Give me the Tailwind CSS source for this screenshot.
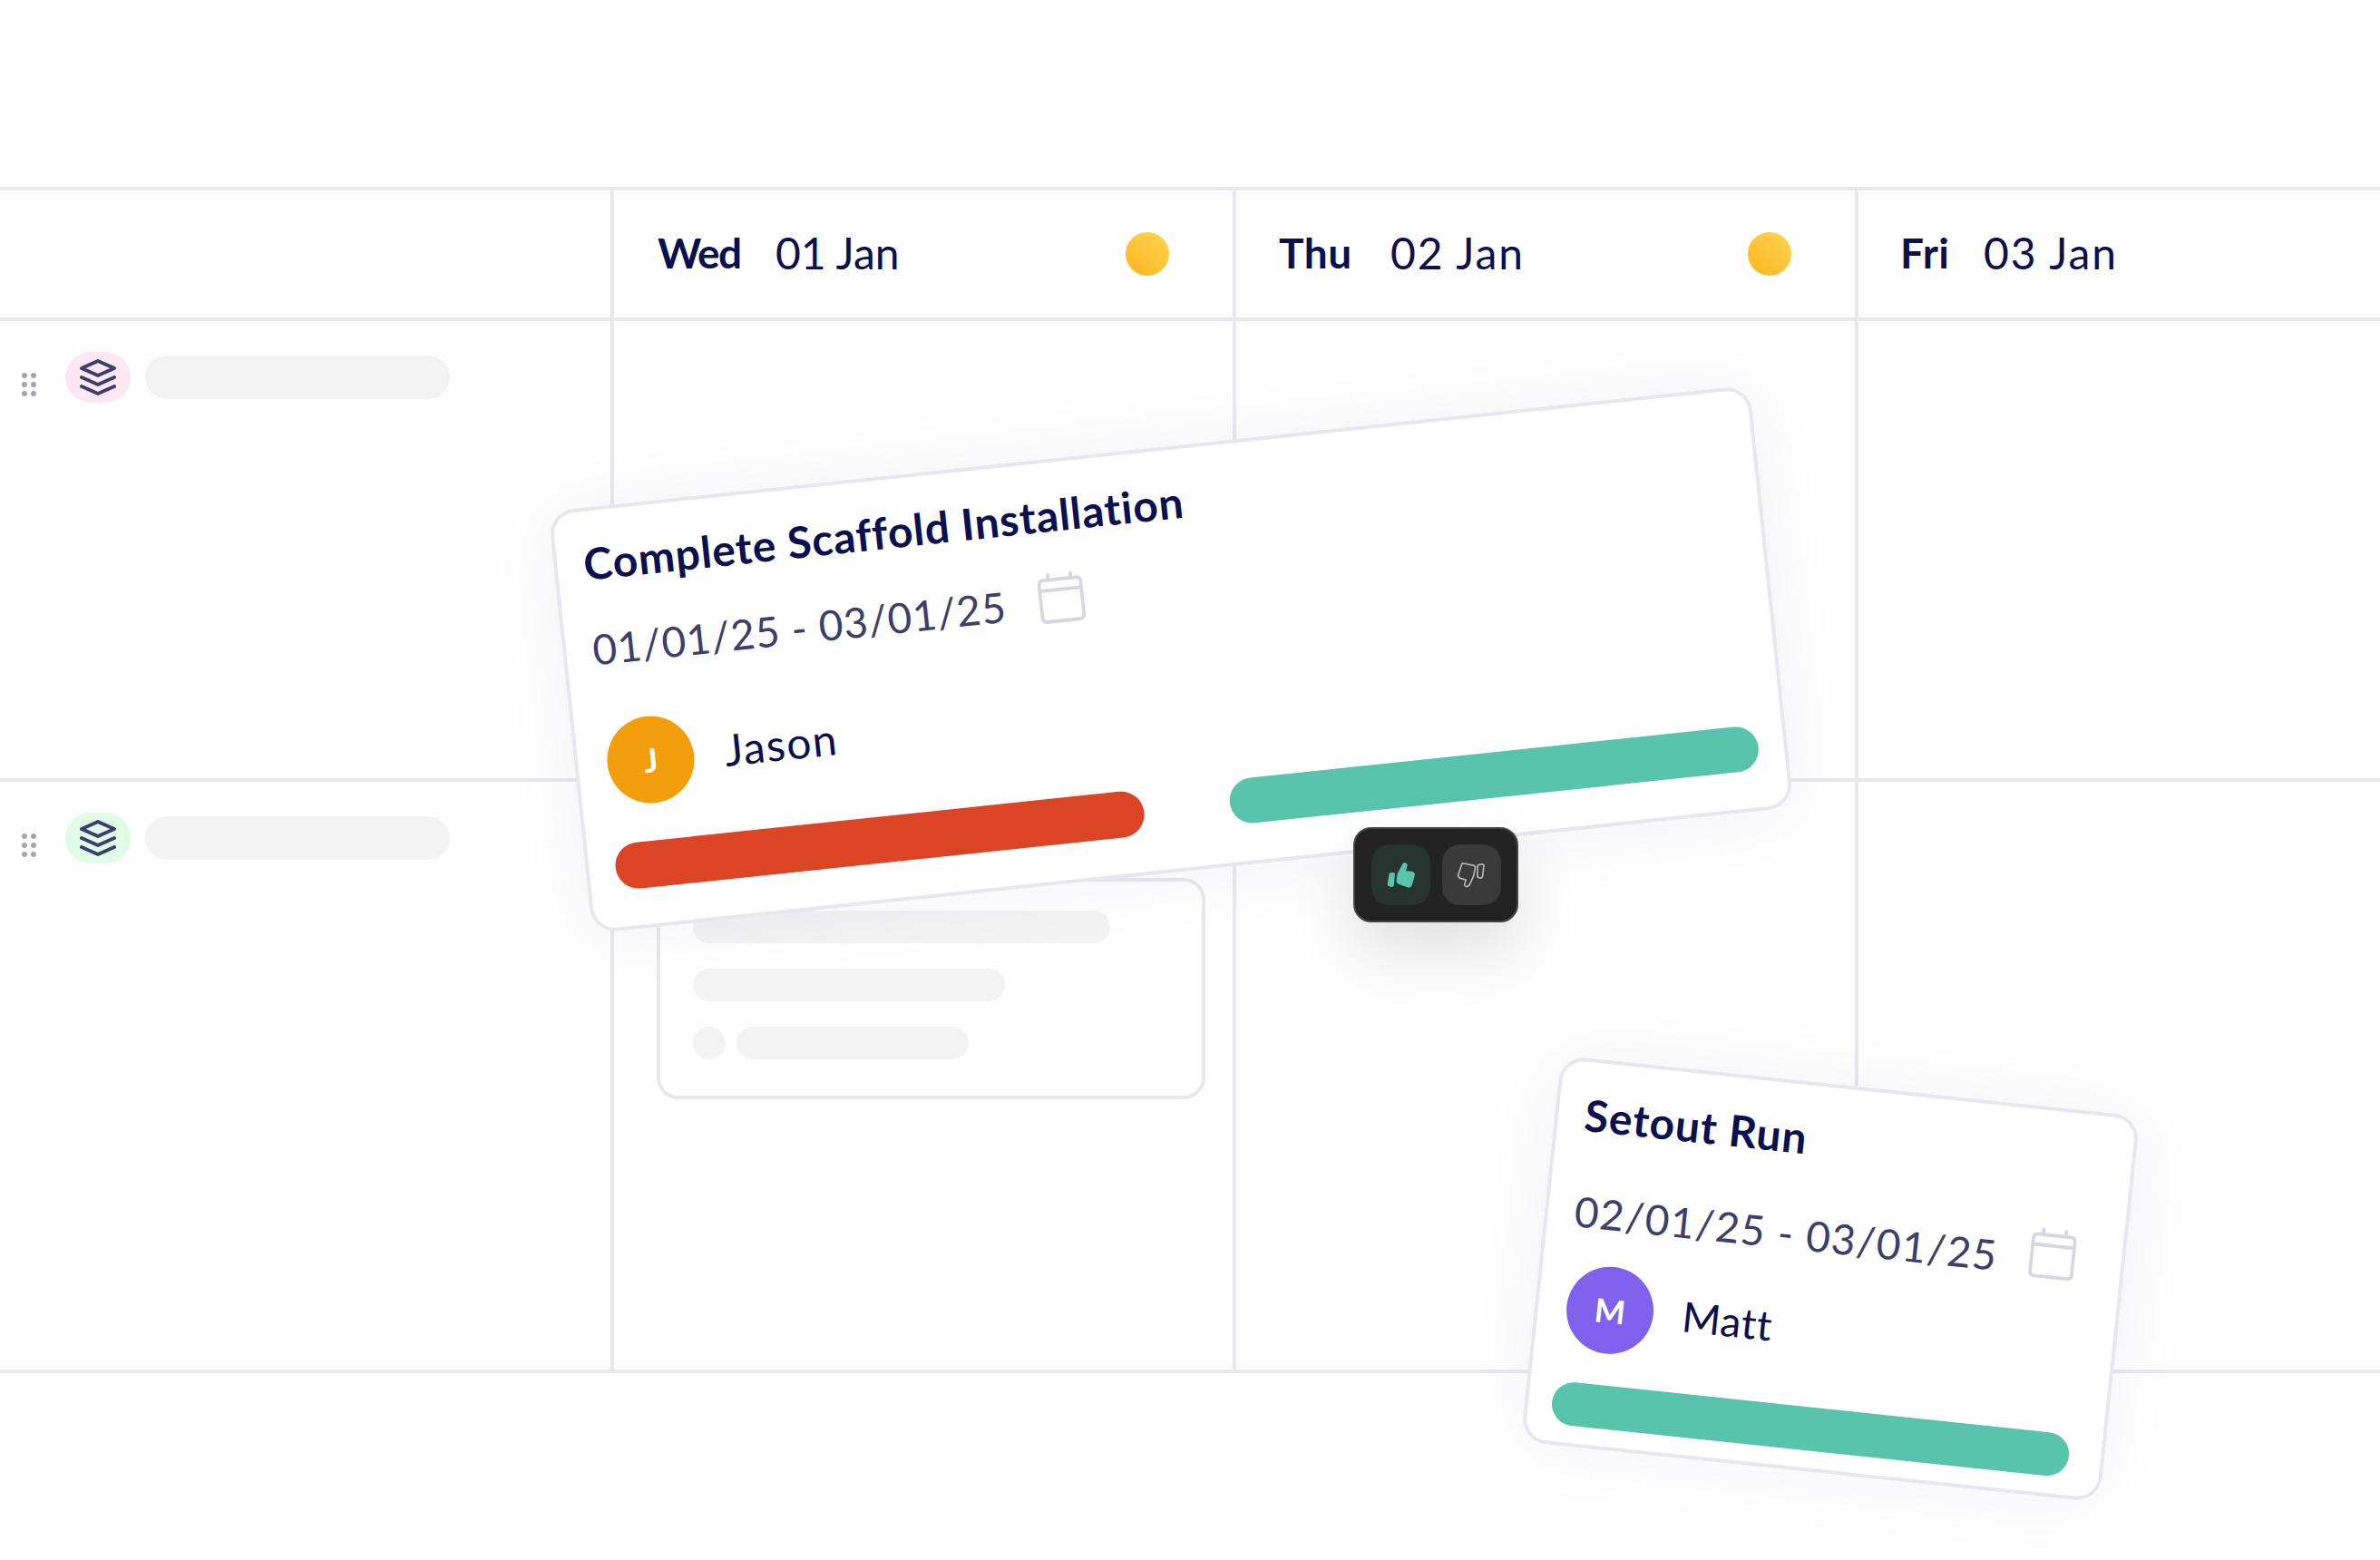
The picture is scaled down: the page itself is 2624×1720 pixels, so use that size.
<!DOCTYPE html>
<html>
	<head>
		<meta charset="UTF-8" />
		<title>Schedule</title>
		<script src="https://cdn.jsdelivr.net/npm/@tailwindcss/browser@4"></script>
	</head>
	<body class="relative w-[2624px] h-[1720px] overflow-hidden bg-white font-['Lato',sans-serif] text-[#0b1150]">
		<div class="pt-[206px]">
			<!-- header row -->
			<div class="grid grid-cols-[673px_686px_686px_1fr] h-[148px] border-y-4 border-[#e7e8ef] bg-[#fefefe]">
				<div></div>
				<div class="border-l-4 border-[#e7e8ef] pl-[48px] pr-[70px] flex items-center text-[48px]">
					<span class="font-bold text-[46px] tracking-[-1.5px] w-[130px] -mt-[3px]">Wed</span>
					<span class="-mt-[3px]">01 Jan</span>
					<span class="ml-auto w-[48px] h-[48px] rounded-full bg-gradient-to-tr from-[#fdb41c] to-[#ffd54f]"></span>
				</div>
				<div class="border-l-4 border-[#e7e8ef] pl-[47px] pr-[70px] flex items-center text-[48px]">
					<span class="font-bold text-[46px] tracking-[0.5px] w-[123px] -mt-[3px]">Thu</span>
					<span class="tracking-[1.9px] -mt-[3px]">02 Jan</span>
					<span class="ml-auto w-[48px] h-[48px] rounded-full bg-gradient-to-tr from-[#fdb41c] to-[#ffd54f]"></span>
				</div>
				<div class="border-l-4 border-[#e7e8ef] pl-[46px] flex items-center text-[48px]">
					<span class="font-bold text-[46px] tracking-[0.5px] w-[92px] -mt-[3px]">Fri</span>
					<span class="tracking-[1.9px] -mt-[3px]">03 Jan</span>
				</div>
			</div>

			<!-- row 1 -->
			<div class="grid grid-cols-[673px_686px_686px_1fr] h-[508px] border-b-4 border-[#e7e8ef] bg-[#fefefe]">
				<div class="flex items-start pt-[34px] pl-[24px]">
					<svg class="mt-[23px] w-[16px] h-[26px] text-[#a5a3bf]" viewBox="0 0 16 26" fill="currentColor"><circle cx="3" cy="3" r="3"/><circle cx="13" cy="3" r="3"/><circle cx="3" cy="13" r="3"/><circle cx="13" cy="13" r="3"/><circle cx="3" cy="23" r="3"/><circle cx="13" cy="23" r="3"/></svg>
					<div class="ml-[32px] w-[72px] h-[56px] rounded-full bg-[#fbe8f3] flex items-center justify-center">
						<svg class="w-[40px] h-[40px]" viewBox="0 0 40 40" fill="none" stroke="#3b3f6e" stroke-width="4" stroke-linecap="round" stroke-linejoin="round"><path d="M20 2 38 10 20 18 2 10Z"/><path d="M2 20 20 28 38 20"/><path d="M2 30 20 38 38 30"/></svg>
					</div>
					<div class="ml-[16px] mt-[4px] w-[336px] h-[48px] rounded-full bg-[#f3f3f3]"></div>
				</div>
				<div class="border-l-4 border-[#e7e8ef]"></div>
				<div class="border-l-4 border-[#e7e8ef]"></div>
				<div class="border-l-4 border-[#e7e8ef]"></div>
			</div>

			<!-- row 2 -->
			<div class="grid grid-cols-[673px_686px_686px_1fr] h-[652px] border-b-4 border-[#e7e8ef] bg-[#fefefe]">
				<div class="flex items-start pt-[34px] pl-[24px]">
					<svg class="mt-[23px] w-[16px] h-[26px] text-[#a5a3bf]" viewBox="0 0 16 26" fill="currentColor"><circle cx="3" cy="3" r="3"/><circle cx="13" cy="3" r="3"/><circle cx="3" cy="13" r="3"/><circle cx="13" cy="13" r="3"/><circle cx="3" cy="23" r="3"/><circle cx="13" cy="23" r="3"/></svg>
					<div class="ml-[32px] w-[72px] h-[56px] rounded-full bg-[#dffbe6] flex items-center justify-center">
						<svg class="w-[40px] h-[40px]" viewBox="0 0 40 40" fill="none" stroke="#3b3f6e" stroke-width="4" stroke-linecap="round" stroke-linejoin="round"><path d="M20 2 38 10 20 18 2 10Z"/><path d="M2 20 20 28 38 20"/><path d="M2 30 20 38 38 30"/></svg>
					</div>
					<div class="ml-[16px] mt-[4px] w-[336px] h-[48px] rounded-full bg-[#f3f3f3]"></div>
				</div>
				<div class="border-l-4 border-[#e7e8ef] pt-[106px] pl-[47px]">
					<div class="w-[605px] h-[244px] border-4 border-[#e7e8ef] rounded-[24px] pt-[32px] pl-[36px] flex flex-col gap-[28px] bg-white">
						<div class="w-[460px] h-[36px] rounded-full bg-[#f3f3f3]"></div>
						<div class="w-[344px] h-[36px] rounded-full bg-[#f3f3f3]"></div>
						<div class="flex gap-[12px]">
							<div class="w-[36px] h-[36px] rounded-full bg-[#f3f3f3]"></div>
							<div class="w-[256px] h-[36px] rounded-full bg-[#f3f3f3]"></div>
						</div>
					</div>
				</div>
				<div class="border-l-4 border-[#e7e8ef]"></div>
				<div class="border-l-4 border-[#e7e8ef]"></div>
			</div>
		</div>

		<!-- dragged card -->
		<div class="absolute left-[625px] top-[493px] w-[1332px] h-[468px] -rotate-6 bg-white border-4 border-[#e7e8ef] rounded-[28px] shadow-[0_4px_80px_rgba(40,40,110,0.05)] pt-[32px] pl-[29px] pr-[28px]">
			<div class="text-[48px] leading-[52px] font-bold tracking-[0.8px]">Complete Scaffold Installation</div>
			<div class="mt-[40px] flex items-center h-[56px] text-[#3b3f6e] text-[46px] tracking-[0.75px]">
				<span>01/01/25 - 03/01/25</span>
				<svg class="ml-[37px] -mt-[6px] w-[50px] h-[58px]" viewBox="0 0 52 58" fill="none" stroke="#d6d7e3" stroke-width="4" stroke-linecap="round" stroke-linejoin="round"><rect x="2" y="8" width="48" height="48" rx="5"/><path d="M2 20H50M13 2V8M39 2V8"/></svg>
			</div>
			<div class="mt-[52px] ml-[3px] flex items-center">
				<div class="w-[96px] h-[96px] rounded-full bg-[#f59e0b] text-white text-[36px] font-bold flex items-center justify-center">J</div>
				<span class="ml-[34px] -mt-[4px] text-[48px] tracking-[1.5px]">Jason</span>
			</div>
			<div class="mt-[41px] flex justify-between items-start">
				<div class="w-[586px] h-[51px] rounded-full bg-[#db4425]"></div>
				<div class="w-[586px] h-[50px] rounded-full bg-[#58c4ab]"></div>
			</div>
		</div>

		<!-- vote toolbar -->
		<div class="absolute left-[1492px] top-[912px] w-[182px] h-[105px] rounded-[20px] bg-[#222222] border-2 border-[#444444] shadow-[0_30px_70px_rgba(0,0,0,0.12)] flex items-center justify-center gap-[13px]">
			<div class="w-[65px] h-[67px] rounded-[20px] bg-[#26332e] flex items-center justify-center">
				<svg class="w-[34px] h-[34px]" viewBox="200 170 100 100" fill="#58c4ab"><path d="M240 215 258 182Q268 174 273 188L268 205 290 208Q299 211 296 222L287 254Q283 263 272 259L243 249Q236 246 237 238Z"/><path d="M214 213 227 211Q233 211 232 217L229 252Q228 258 222 258L213 256Q207 255 208 249Z"/></svg>
			</div>
			<div class="w-[65px] h-[67px] rounded-[20px] bg-[#3a3a3a] flex items-center justify-center">
				<svg class="w-[34px] h-[34px]" viewBox="438 180 100 100" fill="none" stroke="#b5b5b5" stroke-width="5" stroke-linejoin="round"><path d="M459 191 495 198Q502 200 501 206L496 232 482 262Q473 272 466 262L471 245 453 240Q444 236 446 228Z"/><path d="M514 196 524 194Q530 194 529 200L525 232Q524 240 517 239 508 238 508 232L509 201Q509 197 514 196Z"/></svg>
			</div>
		</div>

		<!-- second card -->
		<div class="absolute left-[1697px] top-[1196px] w-[642px] h-[428px] rotate-6 bg-white border-4 border-[#e7e8ef] rounded-[28px] shadow-[0_4px_80px_rgba(40,40,110,0.05)] pt-[32px] pl-[29px] pr-[26px]">
			<div class="text-[48px] leading-[52px] font-bold tracking-[0.9px]">Setout Run</div>
			<div class="mt-[52px] flex items-center h-[56px] text-[#3b3f6e] text-[46px] tracking-[1.3px]">
				<span>02/01/25 - 03/01/25</span>
				<svg class="ml-[35px] -mt-[14px] shrink-0 w-[50px] h-[58px]" viewBox="0 0 52 58" fill="none" stroke="#d6d7e3" stroke-width="4" stroke-linecap="round" stroke-linejoin="round"><rect x="2" y="8" width="48" height="48" rx="5"/><path d="M2 20H50M13 2V8M39 2V8"/></svg>
			</div>
			<div class="mt-[30px] ml-[2px] flex items-center">
				<div class="w-[96px] h-[96px] rounded-full bg-[#7e62ee] text-white text-[36px] font-bold flex items-center justify-center">M</div>
				<span class="ml-[32px] -mt-[6px] text-[46px] tracking-[0.5px]">Matt</span>
			</div>
			<div class="mt-[35px] -ml-[3px] w-[573px] h-[48px] rounded-full bg-[#58c4ab]"></div>
		</div>
	</body>
</html>
